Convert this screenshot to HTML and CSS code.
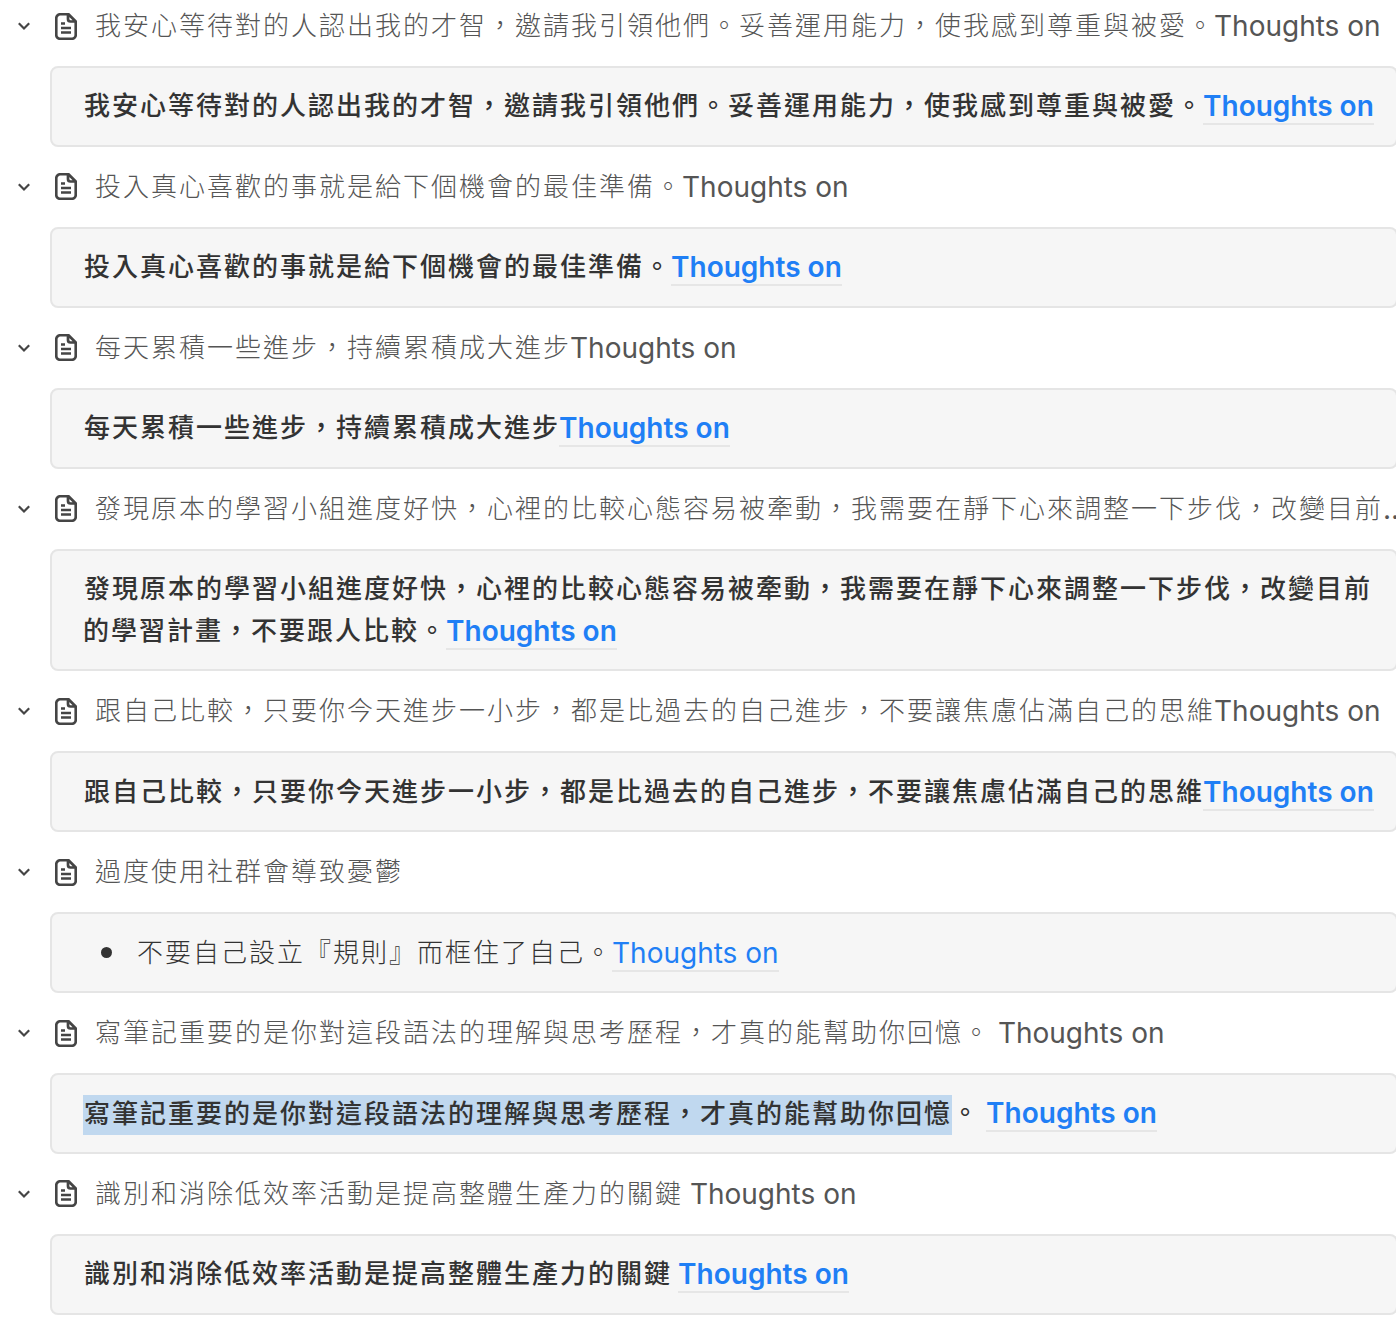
FILE: index.html
```html
<!DOCTYPE html>
<html lang="zh-Hant">
<head>
<meta charset="utf-8">
<title>Thoughts on</title>
<link rel="stylesheet" href="styles.css">
</head>
<body>
<svg class="defs" width="0" height="0" aria-hidden="true">
  <symbol id="chev" viewBox="0 0 16 16"><path d="M2.800 5.300 8 10.500l5.200-5.200" fill="none" stroke="currentColor" stroke-width="2.200"/></symbol>
  <symbol id="doc" viewBox="0 0 22 27"><path d="M5.250 1.250h8.250L20.750 8.500V22a3.750 3.750 0 0 1-3.750 3.750H5.250A3.750 3.750 0 0 1 1.250 22V5.250a4 4 0 0 1 4-4Z M13 1.500V6a2.500 2.500 0 0 0 2.500 2.500h5 M6 10.500h4 M6 15h10 M6 19.500h10" fill="none" stroke="currentColor" stroke-width="2.700" stroke-linejoin="round"/></symbol>
</svg>
<main class="list">

<section class="item">
  <div class="head"><svg class="chev"><use href="#chev"/></svg><svg class="doc"><use href="#doc"/></svg><span class="title"><span class="zh">我安心等待對的人認出我的才智，邀請我引領他們。妥善運用能力，使我感到尊重與被愛。</span>Thoughts on</span></div>
  <div class="box"><p class="para"><span class="zh">我安心等待對的人認出我的才智，邀請我引領他們。妥善運用能力，使我感到尊重與被愛。</span><a class="link">Thoughts on</a></p></div>
</section>

<section class="item">
  <div class="head"><svg class="chev"><use href="#chev"/></svg><svg class="doc"><use href="#doc"/></svg><span class="title"><span class="zh">投入真心喜歡的事就是給下個機會的最佳準備。</span>Thoughts on</span></div>
  <div class="box"><p class="para"><span class="zh">投入真心喜歡的事就是給下個機會的最佳準備。</span><a class="link">Thoughts on</a></p></div>
</section>

<section class="item">
  <div class="head"><svg class="chev"><use href="#chev"/></svg><svg class="doc"><use href="#doc"/></svg><span class="title"><span class="zh">每天累積一些進步，持續累積成大進步</span>Thoughts on</span></div>
  <div class="box"><p class="para"><span class="zh">每天累積一些進步，持續累積成大進步</span><a class="link">Thoughts on</a></p></div>
</section>

<section class="item">
  <div class="head"><svg class="chev"><use href="#chev"/></svg><svg class="doc"><use href="#doc"/></svg><span class="title"><span class="zh">發現原本的學習小組進度好快，心裡的比較心態容易被牽動，我需要在靜下心來調整一下步伐，改變目前的學習計畫，不要跟人比較。</span>Thoughts on</span></div>
  <div class="box"><p class="para"><span class="zh">發現原本的學習小組進度好快，心裡的比較心態容易被牽動，我需要在靜下心來調整一下步伐，改變目前的學習計畫，不要跟人比較。</span><a class="link">Thoughts on</a></p></div>
</section>

<section class="item">
  <div class="head"><svg class="chev"><use href="#chev"/></svg><svg class="doc"><use href="#doc"/></svg><span class="title"><span class="zh">跟自己比較，只要你今天進步一小步，都是比過去的自己進步，不要讓焦慮佔滿自己的思維</span>Thoughts on</span></div>
  <div class="box"><p class="para"><span class="zh">跟自己比較，只要你今天進步一小步，都是比過去的自己進步，不要讓焦慮佔滿自己的思維</span><a class="link">Thoughts on</a></p></div>
</section>

<section class="item">
  <div class="head"><svg class="chev"><use href="#chev"/></svg><svg class="doc"><use href="#doc"/></svg><span class="title"><span class="zh">過度使用社群會導致憂鬱</span></span></div>
  <div class="box"><ul class="bullets"><li><span><span class="zh">不要自己設立『規則』而框住了自己。</span><a class="link link-plain">Thoughts on</a></span></li></ul></div>
</section>

<section class="item">
  <div class="head"><svg class="chev"><use href="#chev"/></svg><svg class="doc"><use href="#doc"/></svg><span class="title"><span class="zh">寫筆記重要的是你對這段語法的理解與思考歷程，才真的能幫助你回憶。</span> Thoughts on</span></div>
  <div class="box"><p class="para"><span class="zh selected">寫筆記重要的是你對這段語法的理解與思考歷程，才真的能幫助你回憶</span><span class="zh">。</span> <a class="link">Thoughts on</a></p></div>
</section>

<section class="item">
  <div class="head"><svg class="chev"><use href="#chev"/></svg><svg class="doc"><use href="#doc"/></svg><span class="title"><span class="zh">識別和消除低效率活動是提高整體生產力的關鍵</span> Thoughts on</span></div>
  <div class="box"><p class="para"><span class="zh">識別和消除低效率活動是提高整體生產力的關鍵</span> <a class="link">Thoughts on</a></p></div>
</section>

</main>
</body>
</html>
```
FILE: styles.css
```css
html, body {
  margin: 0;
  padding: 0;
  background: #fff;
}
body {
  width: 1396px;
  height: 1324px;
  overflow: hidden;
  font-family: Inter, "Noto Sans CJK TC", sans-serif;
  font-size: 28px;
  color: #37352f;
}
.defs {
  position: absolute;
}
.list {
  display: flex;
  flex-direction: column;
}
.item {
  padding-bottom: 14px;
}
.head {
  display: flex;
  align-items: center;
  height: 52px;
  margin-bottom: 14px;
  margin-right: -14px;
  color: #454545;
}
.chev {
  flex: none;
  width: 16px;
  height: 16px;
  margin-left: 16px;
}
.doc {
  flex: none;
  width: 22px;
  height: 27px;
  margin-left: 23px;
}
.title {
  margin-left: 17px;
  min-width: 0;
  flex: 1;
  line-height: 42px;
  white-space: nowrap;
  overflow: hidden;
  text-overflow: ellipsis;
  font-weight: 400;
  color: #555;
}
.zh {
  font-size: 26px;
  line-height: 1;
  letter-spacing: 2px;
  margin: 0 -1px 0 1px;
  vertical-align: 1px;
}
.title .zh {
  font-weight: 300;
}
.box {
  margin-left: 50px;
  margin-right: -2px;
  padding: 17.43px 20px 17.43px 31px;
  background: #f6f6f6;
  border: 2px solid #e5e5e5;
  border-radius: 8px;
}
.para {
  margin: 0;
  line-height: 42px;
  font-weight: 600;
  color: #333;
}
.para .zh {
  font-weight: 500;
}
.link {
  color: #1f7ff5;
  border-bottom: 2px solid #e6e6e6;
}
.para .selected {
  margin-left: 0;
  padding: 2.7px 0 6.500px 1px;
  background: #c0d8ef;
}
.bullets {
  margin: 0;
  padding: 0 0 0 17.5px;
  list-style: none;
  line-height: 42px;
}
.bullets li {
  display: flex;
  align-items: center;
  gap: 24.5px;
}
.bullets li::before {
  content: "";
  flex: none;
  width: 11px;
  height: 11px;
  border-radius: 50%;
  background: #333;
}
.bullets .zh {
  font-weight: 300;
  color: #333;
}
.link-plain {
  font-weight: 400;
}
```
